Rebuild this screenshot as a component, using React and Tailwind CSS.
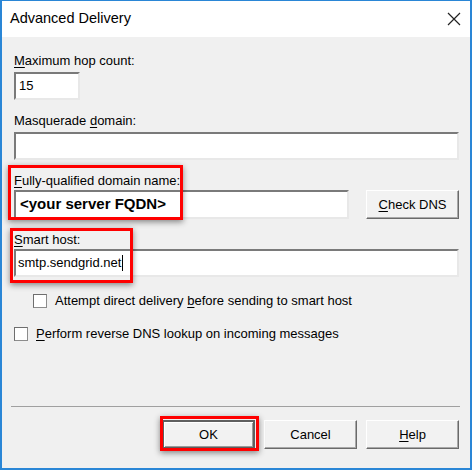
import React from 'react';

const font = { fontFamily: '"Liberation Sans", Arial, sans-serif' };

const U = ({ children }) => <span className="underline underline-offset-2 decoration-1">{children}</span>;

const Field = ({ className = '', children }) => (
  <div
    className={`h-[28px] bg-white border-2 border-t-[#7a7a7a] border-l-[#7a7a7a] border-r-[#e8e8e8] border-b-[#e8e8e8] flex items-center pl-[2px] ${className}`}
  >
    {children}
  </div>
);

const Button = ({ children, isDefault = false, className = '' }) => (
  <button
    className={`h-[29px] w-[93px] bg-[#f2f2f2] text-[13px] text-black flex items-center justify-center ${
      isDefault
        ? 'border-2 border-[#5f5f5f] shadow-[inset_1px_1px_0_#ffffff,inset_-1px_-1px_0_#9a9a9a]'
        : 'border border-t-white border-l-white border-r-[#6a6a6a] border-b-[#6a6a6a] shadow-[inset_-1px_-1px_0_#a8a8a8]'
    } ${className}`}
  >
    {children}
  </button>
);

const Checkbox = () => (
  <span className="w-[14px] h-[14px] bg-white border border-[#8c8c8c] border-t-[#6e6e6e] border-l-[#6e6e6e] shrink-0" />
);

export default function App() {
  return (
    <div
      className="relative w-[472px] h-[470px] border-x-2 border-b-2 border-t border-[#2a86d6] bg-[#f0f0f0] flex flex-col text-[13px] text-black"
      style={font}
    >
      {/* Title bar */}
      <div className="h-[36px] bg-white flex items-center justify-between pl-[8px] pr-[9px]">
        <span className="text-[14.5px] text-black">Advanced Delivery</span>
        <svg width="14" height="14" viewBox="0 0 14 14" className="text-[#222]">
          <path d="M1 1 L13 13 M13 1 L1 13" stroke="currentColor" strokeWidth="1.2" />
        </svg>
      </div>

      {/* Body */}
      <div className="flex-1 flex flex-col pl-[12px] pr-[11px] pt-[15px]">
        <div className="leading-[17px]"><U>M</U>aximum hop count:</div>
        <Field className="mt-[3px] w-[66px]">
          <span className="pl-[1px]">15</span>
        </Field>

        <div className="leading-[17px] mt-[12px]">Masquerade <U>d</U>omain:</div>
        <Field className="mt-[3px] h-[27px]" />

        <div className="leading-[17px] mt-[12px]"><U>F</U>ully-qualified domain name:</div>
        <div className="flex items-center gap-[17px] mt-[1px]">
          <Field className="flex-1 h-[29px] pl-[4px]">
            <span className="font-bold text-[15px]">&lt;your server FQDN&gt;</span>
          </Field>
          <Button><U>C</U>heck DNS</Button>
        </div>

        <div className="leading-[17px] mt-[12px]"><U>S</U>mart host:</div>
        <Field className="mt-[1px]">
          <span>smtp.sendgrid.net</span>
          <span className="ml-[1px] w-px h-[16px] bg-black" />
        </Field>

        <label className="flex items-center gap-[8px] mt-[15px] ml-[19px] h-[17px]">
          <Checkbox />
          <span>Attempt direct delivery <U>b</U>efore sending to smart host</span>
        </label>
        <label className="flex items-center gap-[8px] mt-[16px] h-[17px]">
          <Checkbox />
          <span><U>P</U>erform reverse DNS lookup on incoming messages</span>
        </label>

        <div className="mt-[64px] -ml-[3px] -mr-[1px] h-px bg-[#a0a0a0]" />

        <div className="flex justify-end gap-[9px] mt-[13px]">
          <Button isDefault>OK</Button>
          <Button>Cancel</Button>
          <Button><U>H</U>elp</Button>
        </div>
      </div>

      {/* Annotation highlights */}
      <div className="absolute left-[6px] top-[164px] w-[175px] h-[55px] border-[3px] border-[#ff0000] shadow-[0_2px_6px_rgba(0,0,0,0.45)]" />
      <div className="absolute left-[8px] top-[227px] w-[123px] h-[55px] border-[3px] border-[#ff0000] shadow-[0_2px_6px_rgba(0,0,0,0.45)]" />
      <div className="absolute left-[158px] top-[415px] w-[99px] h-[35px] border-[3px] border-[#ff0000] shadow-[0_2px_6px_rgba(0,0,0,0.45)]" />
    </div>
  );
}
